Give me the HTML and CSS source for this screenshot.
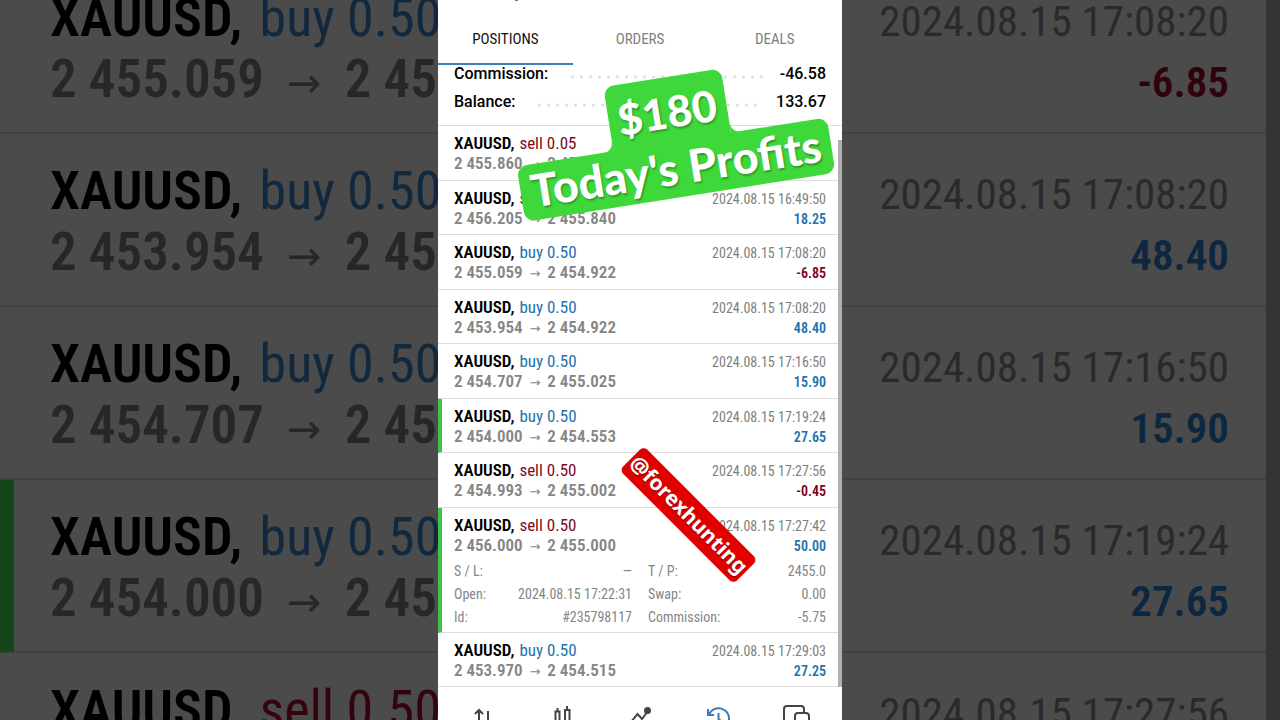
FILE: index.html
```html
<!DOCTYPE html>
<html lang="en">
<head>
    <meta charset="UTF-8">
    <meta name="viewport" content="width=device-width, initial-scale=1.0">
    <title>Trade history</title>
    <link rel="stylesheet" href="styles.css">
</head>

<body>
    <div class="stage">
        <!-- enlarged, dimmed copy of the list: left part -->
        <div class="side side-left" aria-hidden="true">
            <div class="big-row">
                <p class="big-title"><b>XAUUSD,</b> <span class="buy">buy 0.50</span></p>
                <p class="big-prices">2 455.059 <span class="arrow">→</span> 2 45</p>
            </div>
            <div class="big-row">
                <p class="big-title"><b>XAUUSD,</b> <span class="buy">buy 0.50</span></p>
                <p class="big-prices">2 453.954 <span class="arrow">→</span> 2 45</p>
            </div>
            <div class="big-row">
                <p class="big-title"><b>XAUUSD,</b> <span class="buy">buy 0.50</span></p>
                <p class="big-prices">2 454.707 <span class="arrow">→</span> 2 45</p>
            </div>
            <div class="big-row marked">
                <p class="big-title"><b>XAUUSD,</b> <span class="buy">buy 0.50</span></p>
                <p class="big-prices">2 454.000 <span class="arrow">→</span> 2 45</p>
            </div>
            <div class="big-row">
                <p class="big-title"><b>XAUUSD,</b> <span class="sell">sell 0.50</span></p>
            </div>
        </div>

        <main class="phone">
            <header class="top">
                <span class="title-tail"></span>
                <nav class="tabs">
                    <button class="tab active" type="button">POSITIONS</button>
                    <button class="tab" type="button">ORDERS</button>
                    <button class="tab" type="button">DEALS</button>
                </nav>
            </header>

            <section class="summary">
                <div class="sum-row"><span>Commission:</span><i class="dots"></i><span>-46.58</span></div>
                <div class="sum-row"><span>Balance:</span><i class="dots"></i><span>133.67</span></div>
            </section>

            <section class="list">
                <article class="deal">
                    <div class="line"><p class="name"><b>XAUUSD,</b> <span class="sell">sell 0.05</span></p></div>
                    <div class="line"><p class="prices">2 455.860 <span class="arrow">→</span> 2 455</p></div>
                </article>
                <article class="deal">
                    <div class="line"><p class="name"><b>XAUUSD,</b> <span class="sell">sell 0.50</span></p><time>2024.08.15 16:49:50</time></div>
                    <div class="line"><p class="prices">2 456.205 <span class="arrow">→</span> 2 455.840</p><b class="profit">18.25</b></div>
                </article>
                <article class="deal">
                    <div class="line"><p class="name"><b>XAUUSD,</b> <span class="buy">buy 0.50</span></p><time>2024.08.15 17:08:20</time></div>
                    <div class="line"><p class="prices">2 455.059 <span class="arrow">→</span> 2 454.922</p><b class="profit loss">-6.85</b></div>
                </article>
                <article class="deal">
                    <div class="line"><p class="name"><b>XAUUSD,</b> <span class="buy">buy 0.50</span></p><time>2024.08.15 17:08:20</time></div>
                    <div class="line"><p class="prices">2 453.954 <span class="arrow">→</span> 2 454.922</p><b class="profit">48.40</b></div>
                </article>
                <article class="deal">
                    <div class="line"><p class="name"><b>XAUUSD,</b> <span class="buy">buy 0.50</span></p><time>2024.08.15 17:16:50</time></div>
                    <div class="line"><p class="prices">2 454.707 <span class="arrow">→</span> 2 455.025</p><b class="profit">15.90</b></div>
                </article>
                <article class="deal marked">
                    <div class="line"><p class="name"><b>XAUUSD,</b> <span class="buy">buy 0.50</span></p><time>2024.08.15 17:19:24</time></div>
                    <div class="line"><p class="prices">2 454.000 <span class="arrow">→</span> 2 454.553</p><b class="profit">27.65</b></div>
                </article>
                <article class="deal">
                    <div class="line"><p class="name"><b>XAUUSD,</b> <span class="sell">sell 0.50</span></p><time>2024.08.15 17:27:56</time></div>
                    <div class="line"><p class="prices">2 454.993 <span class="arrow">→</span> 2 455.002</p><b class="profit loss">-0.45</b></div>
                </article>
                <article class="deal marked open">
                    <div class="line"><p class="name"><b>XAUUSD,</b> <span class="sell">sell 0.50</span></p><time>2024.08.15 17:27:42</time></div>
                    <div class="line"><p class="prices">2 456.000 <span class="arrow">→</span> 2 455.000</p><b class="profit">50.00</b></div>
                    <dl class="details">
                        <div><dt>S / L:</dt><dd>—</dd></div>
                        <div><dt>T / P:</dt><dd>2455.0</dd></div>
                        <div><dt>Open:</dt><dd>2024.08.15 17:22:31</dd></div>
                        <div><dt>Swap:</dt><dd>0.00</dd></div>
                        <div><dt>Id:</dt><dd>#235798117</dd></div>
                        <div><dt>Commission:</dt><dd>-5.75</dd></div>
                    </dl>
                </article>
                <article class="deal">
                    <div class="line"><p class="name"><b>XAUUSD,</b> <span class="buy">buy 0.50</span></p><time>2024.08.15 17:29:03</time></div>
                    <div class="line"><p class="prices">2 453.970 <span class="arrow">→</span> 2 454.515</p><b class="profit">27.25</b></div>
                </article>
                <span class="scrollbar"></span>
            </section>

            <nav class="bottom">
                <button type="button" aria-label="Quotes">
                    <svg width="28" height="28" viewBox="0 0 28 28"><path d="M9 24V7.500M5 12l4-4 4 4M18 9v14M14 19l4 4 4-4"/></svg>
                </button>
                <button type="button" aria-label="Charts">
                    <svg width="28" height="28" viewBox="0 0 28 28"><path d="M9.500 6v4M19 4v4M7.500 9.500h4V24h-4zM17 8h4.500v13H17z"/></svg>
                </button>
                <button type="button" aria-label="Trade">
                    <svg width="28" height="28" viewBox="0 0 28 28"><path d="M5 20l6.500-8 4.500 5 6-8"/><circle class="dot" cx="21.500" cy="8.500" r="2.500"/></svg>
                </button>
                <button class="active" type="button" aria-label="History">
                    <svg width="28" height="28" viewBox="0 0 28 28"><path d="M5 13a10.300 10.300 0 1 1-.5 5M4 7v6h6M14.500 11v6l4 3"/></svg>
                </button>
                <button type="button" aria-label="Messages">
                    <svg width="28" height="28" viewBox="0 0 28 28"><path d="M12 20H2V7q0-3 3-3h14q3 0 3 3v4"/><rect x="13" y="11" width="14" height="14" rx="3"/></svg>
                </button>
            </nav>

            <div class="profit-sticker">
                <span class="amount">$180</span>
                <span class="caption">Today's Profits</span>
            </div>
            <div class="handle-sticker">@forexhunting</div>
        </main>

        <!-- right part -->
        <div class="side side-right" aria-hidden="true">
            <div class="big-row"><p class="big-time">2024.08.15 17:08:20</p><b class="big-profit loss">-6.85</b></div>
            <div class="big-row"><p class="big-time">2024.08.15 17:08:20</p><b class="big-profit">48.40</b></div>
            <div class="big-row"><p class="big-time">2024.08.15 17:16:50</p><b class="big-profit">15.90</b></div>
            <div class="big-row"><p class="big-time">2024.08.15 17:19:24</p><b class="big-profit">27.65</b></div>
            <div class="big-row"><p class="big-time">2024.08.15 17:27:56</p></div>
        </div>
    </div>
</body>
</html>
```
FILE: styles.css
```css
* {
    box-sizing: border-box;
}

body {
    margin: 0;
    background-color: #4b4b4b;
    font-family: "Roboto Condensed", "Liberation Sans Narrow", Roboto, sans-serif;
}

p, dl, dd {
    margin: 0;
}

button {
    all: unset;
    cursor: pointer;
}

.stage {
    display: grid;
    grid-template-columns: 1fr minmax(320px, 404px) 1fr;
    height: 100vh;
    overflow: hidden;
}

/* dimmed sides */
.side {
    min-width: 0;
    height: 100vh;
    overflow: hidden;
    white-space: nowrap;
    background-color: #4b4b4b;
}

.big-row {
    height: 173px;
    padding: 25px 50px 0;
    border-bottom: 2px solid #414141;
}

.big-row:first-child {
    margin-top: -39px;
}

.big-title {
    font-size: 54px;
    line-height: 64px;
    color: #000;
}

.big-title b {
    margin-right: 5px;
    font-weight: 600;
}

.big-title .buy {
    color: #12293d;
}

.big-title .sell {
    color: #33040d;
}

.big-prices {
    font-size: 53px;
    line-height: 58px;
    font-weight: 600;
    color: #272727;
}

.big-prices .arrow {
    padding: 0 11px;
    font-size: 41px;
}

.side-left .marked {
    border-left: 14px solid #14441a;
    padding-left: 36px;
}

.side-right {
    border-right: 14px solid #343434;
}

.side-right .big-row {
    display: flex;
    flex-direction: column;
    align-items: flex-end;
    padding-right: 37px;
}

.big-time {
    font-size: 43px;
    line-height: 70px;
    color: #2a2a2a;
}

.big-profit {
    font-size: 43px;
    line-height: 52px;
    font-weight: 600;
    color: #0e2740;
}

.big-profit.loss {
    color: #30020b;
}

.arrow {
    padding: 0 3px;
    font-family: "Noto Sans", "DejaVu Sans", sans-serif;
    font-size: 13px;
    font-weight: 400;
    line-height: 0;
}

/* phone */
.phone {
    position: relative;
    display: flex;
    flex-direction: column;
    height: 100vh;
    overflow: hidden;
    background-color: #fff;
}

.title-tail {
    display: block;
    width: 3px;
    height: 1px;
    margin-left: 77px;
    background-color: #777;
}

.tabs {
    display: flex;
    height: 64px;
}

.tab {
    flex: 1;
    padding-top: 14px;
    border-bottom: 2px solid transparent;
    font-size: 15px;
    text-align: center;
    color: #808080;
}

.tab.active {
    color: #111;
    border-bottom-color: #3d7fb5;
}

.summary {
    height: 61px;
    padding: 0 16px;
    border-bottom: 1px solid #ddd;
    font-family: Roboto, sans-serif;
    font-size: 16px;
    font-weight: 500;
}

.sum-row {
    display: flex;
    align-items: center;
    height: 28px;
    line-height: 16px;
}

.sum-row:first-child {
    height: 18px;
    margin-bottom: 5px;
}

.dots {
    flex: 1;
    height: 4px;
    margin: 6px 14px 0 20px;
    background: radial-gradient(circle, #ddd 1px, transparent 2px) 0 0 / 9px 4px repeat-x;
}

.list {
    position: relative;
    flex: 1;
    display: flex;
    flex-direction: column;
}

.deal {
    flex: 1 0 auto;
    min-height: 54px;
    padding: 7px 16px 0;
    border-bottom: 1px solid #ddd;
    white-space: nowrap;
}

.deal.open {
    flex: none;
}

.deal.marked {
    padding-left: 12px;
    border-left: 4px solid #3fc34c;
}

.line {
    display: flex;
    align-items: baseline;
    justify-content: space-between;
    height: 20px;
    line-height: 20px;
}

.name {
    font-size: 17px;
    color: #000;
}

.name b {
    margin-right: 1px;
    font-weight: 600;
}

.buy {
    color: #2272ad;
}

.sell {
    color: #7c0a20;
}

.prices {
    font-size: 17px;
    font-weight: 600;
    color: #858585;
}

time {
    font-size: 14px;
    color: #808080;
}

.profit {
    font-size: 14px;
    font-weight: 600;
    color: #2272ad;
}

.loss {
    color: #80001c;
}

.details {
    display: grid;
    grid-template-columns: 178px 1fr;
    column-gap: 16px;
    padding: 5px 0 3px;
    font-size: 14px;
    line-height: 23px;
    color: #858585;
}

.details div {
    display: flex;
    justify-content: space-between;
}

.scrollbar {
    position: absolute;
    top: 14px;
    right: 0;
    bottom: 0;
    width: 4px;
    background-color: #b0b0b0;
}

.bottom {
    display: flex;
    height: 33px;
    padding: 0 7px;
    overflow: hidden;
}

.bottom button {
    flex: 1;
    padding-top: 15px;
    text-align: center;
    color: #444;
}

.bottom .active {
    color: #3a7cc0;
}

.bottom svg {
    fill: none;
    stroke: currentColor;
    stroke-width: 2;
}

.bottom .dot {
    fill: currentColor;
}

/* stickers over the list */
.profit-sticker {
    position: absolute;
    top: 77px;
    left: 76px;
    width: 314px;
    display: flex;
    flex-direction: column;
    align-items: center;
    transform: rotate(-9deg);
    font-family: Lato, "Noto Sans", sans-serif;
    font-size: 43px;
    font-weight: 900;
    color: #fff;
    text-align: center;
    text-shadow: 1px 2px 2px rgba(0, 0, 0, 0.3);
    white-space: nowrap;
}

.amount {
    position: relative;
    width: 119px;
    height: 66px;
    line-height: 70px;
    border-radius: 10px 10px 0 0;
    background-color: #3fd83a;
}

/* inner corners where the two plates meet */
.amount::before,
.amount::after {
    content: "";
    position: absolute;
    bottom: 0;
    width: 10px;
    height: 10px;
}

.amount::before {
    right: 100%;
    background: radial-gradient(circle at 0 0, transparent 9px, #3fd83a 10px);
}

.amount::after {
    left: 100%;
    background: radial-gradient(circle at 100% 0, transparent 9px, #3fd83a 10px);
}

.caption {
    width: 100%;
    height: 56px;
    margin-top: -1px;
    font-size: 45px;
    line-height: 52px;
    border-radius: 10px;
    background-color: #3fd83a;
}

.handle-sticker {
    position: absolute;
    top: 498px;
    left: 170px;
    width: 161px;
    height: 34px;
    line-height: 32px;
    border-radius: 5px;
    transform: rotate(45deg);
    background-color: #e00000;
    color: #fff;
    font-family: "Noto Sans", sans-serif;
    font-size: 21px;
    font-weight: 700;
    text-align: center;
    text-shadow: 1px 1px 1px rgba(0, 0, 0, 0.3);
}
```
